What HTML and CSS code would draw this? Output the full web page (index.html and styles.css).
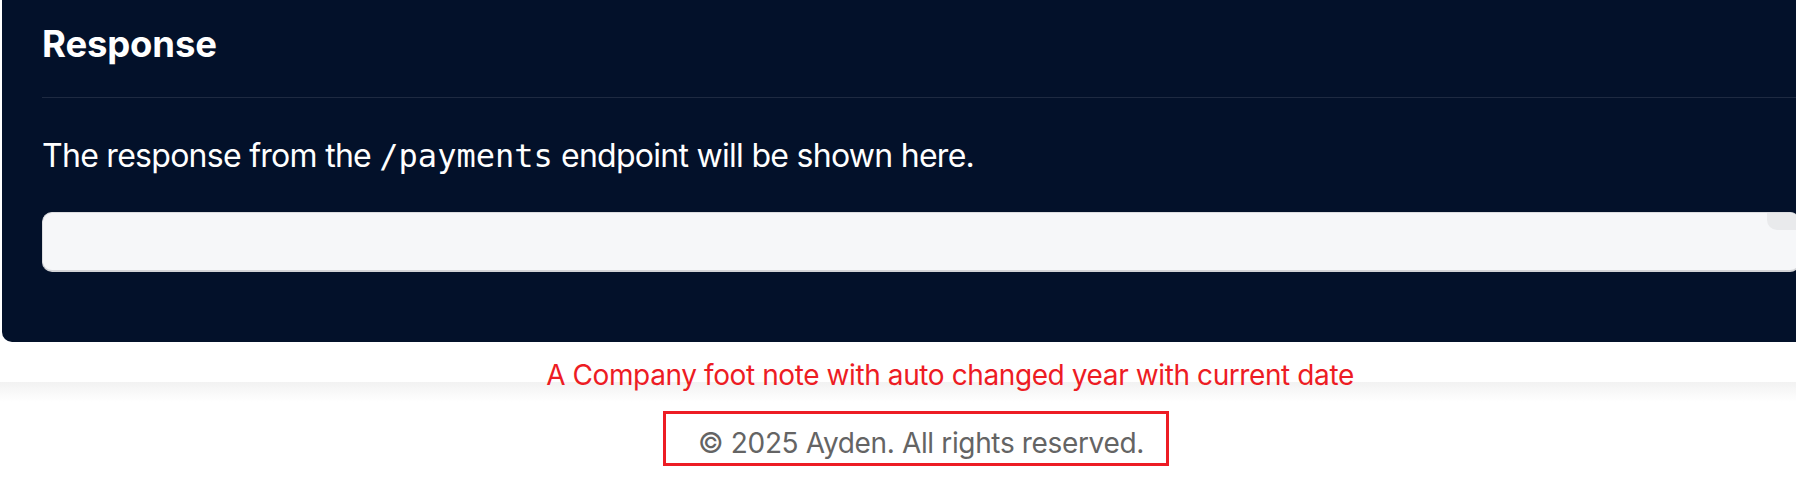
FILE: index.html
```html
<!DOCTYPE html>
<html lang="en">
<head>
<meta charset="utf-8">
<title>Response</title>
<link rel="stylesheet" href="styles.css">
</head>
<body>
<div class="page">
  <section class="panel">
    <div class="panel-head">
      <h2 class="panel-title">Response</h2>
    </div>
    <p class="panel-text">The response from the <code class="code">/payments</code> endpoint will be shown here.</p>
    <div class="response-box">
      <span class="copy-btn"></span>
    </div>
  </section>
  <footer class="footer">
    <div class="note">A Company foot note with auto changed year with current date</div>
    <div class="copyright-box">
      <span class="copyright">© 2025 Ayden. All rights reserved.</span>
    </div>
  </footer>
</div>
</body>
</html>
```

FILE: styles.css
```css
html, body {
  margin: 0;
  padding: 0;
  background: #ffffff;
  overflow: hidden;
}

.page {
  width: 1842px;
  font-family: Inter, "Liberation Sans", sans-serif;
}

.panel {
  margin: 0 2px;
  background: #03112a;
  border-radius: 0 0 10px 10px;
  padding: 26px 40px 70px 40px;
}

.panel-head {
  padding-bottom: 35px;
  border-bottom: 1px solid #1e2a41;
}

.panel-title {
  margin: 0;
  font-size: 36.5px;
  line-height: 36px;
  font-weight: 700;
  letter-spacing: -0.15px;
  color: #ffffff;
}

.panel-text {
  margin: 42px 0 0 0;
  font-size: 32px;
  line-height: 32px;
  letter-spacing: -0.72px;
  color: #ffffff;
}

.code {
  font-family: "DejaVu Sans Mono", "Liberation Mono", monospace;
  font-size: 32px;
  letter-spacing: 0;
}

.response-box {
  position: relative;
  margin-top: 40px;
  height: 57px;
  background: #f6f7f9;
  border: 1px solid #dcdde0;
  border-bottom: 2px solid #d3d4d7;
  border-radius: 10px;
  overflow: hidden;
}

.copy-btn {
  position: absolute;
  top: 0;
  right: 0;
  width: 32px;
  height: 17px;
  background: #e9eaec;
  border-bottom-left-radius: 10px;
}

.footer {
  position: relative;
  margin-top: 40px;
  padding-top: 29px;
  height: 100px;
  background: linear-gradient(#f2f2f2, #ffffff 20px);
  display: flex;
  justify-content: center;
}

.note {
  position: absolute;
  top: -21px;
  left: 0;
  right: 0;
  padding-left: 58px;
  text-align: center;
  font-size: 28px;
  line-height: 28px;
  letter-spacing: -0.4px;
  color: #ed1c24;
}

.copyright-box {
  border: 3px solid #ed1c24;
  padding: 8px 22px 0 32px;
  margin-right: 10px;
  height: 41px;
  box-sizing: content-box;
}

.copyright {
  display: block;
  font-size: 28px;
  line-height: 42px;
  letter-spacing: -0.35px;
  color: #646464;
}
```
